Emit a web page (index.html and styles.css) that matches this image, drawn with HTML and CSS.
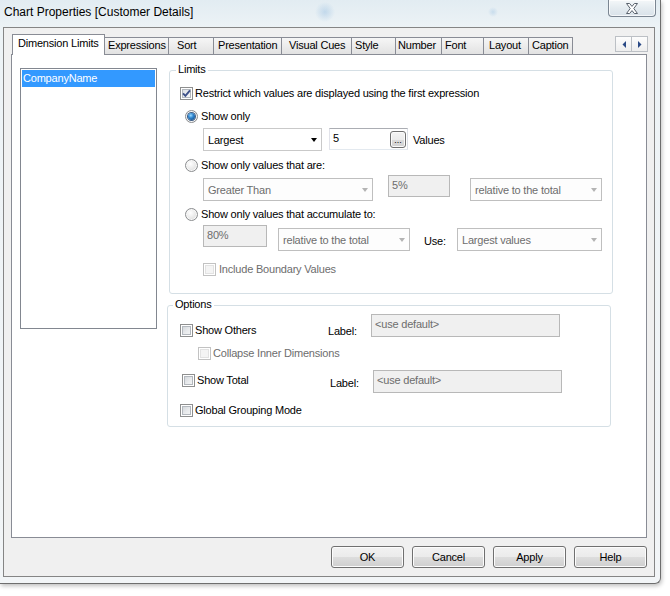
FILE: index.html
```html
<!DOCTYPE html>
<html>
<head>
<meta charset="utf-8">
<title>Chart Properties</title>
<link rel="stylesheet" href="styles.css">
</head>
<body>
<div class="window">
  <div class="titlebar">
    <span class="title">Chart Properties [Customer Details]</span>
    <div class="close">
      <svg width="14" height="11" viewBox="0 0 14 11"><path d="M1.5 0.5 H4.6 L7 3.4 L9.4 0.5 H12.5 L8.8 5.5 L12.5 10.5 H9.4 L7 7.6 L4.6 10.5 H1.5 L5.2 5.5 Z" fill="#fff" stroke="#59626d" stroke-width="1" stroke-linejoin="round"/></svg>
    </div>
  </div>
  <div class="client">
    <div class="tabstrip">
      <div class="tab sel t-dim">Dimension Limits</div>
      <div class="tab t-expr">Expressions</div>
      <div class="tab t-sort">Sort</div>
      <div class="tab t-pres">Presentation</div>
      <div class="tab t-vc">Visual Cues</div>
      <div class="tab t-style">Style</div>
      <div class="tab t-num">Number</div>
      <div class="tab t-font">Font</div>
      <div class="tab t-layout">Layout</div>
      <div class="tab t-cap">Caption</div>
      <div class="tabscroll">
        <span class="sbtn"><svg width="4" height="7" viewBox="0 0 4 7"><path d="M4 0 V7 L0.5 3.5 Z" fill="#2b4a86"/></svg></span>
        <span class="sbtn"><svg width="4" height="7" viewBox="0 0 4 7"><path d="M0 0 V7 L3.5 3.5 Z" fill="#2b4a86"/></svg></span>
      </div>
    </div>
    <div class="panel">
      <div class="listbox">
        <div class="item sel">CompanyName</div>
      </div>
      <div class="groups">
        <div class="group limits">
          <div class="gtitle gt-limits">Limits</div>
          <div class="row r1">
            <span class="chk checked"><svg width="11" height="11" viewBox="0 0 11 11"><path d="M2 5.3 L4.4 7.8 L9 2.4" fill="none" stroke="#3e5189" stroke-width="1.9"/></svg></span>
            <span class="lbl ml2">Restrict which values are displayed using the first expression</span>
          </div>
          <div class="row r2">
            <span class="rad on"><span class="dot"></span></span>
            <span class="lbl ml3">Show only</span>
          </div>
          <div class="row r3">
            <div class="combo w119"><span>Largest</span><span class="arr"></span></div>
            <div class="edit e-five"><span>5</span><span class="dots">...</span></div>
            <span class="lbl values">Values</span>
          </div>
          <div class="row r4">
            <span class="rad"></span>
            <span class="lbl ml3">Show only values that are:</span>
          </div>
          <div class="row r5">
            <div class="combo dis w170 mt3"><span>Greater Than</span><span class="arr"></span></div>
            <div class="edit dis e-pct">5%</div>
            <div class="combo dis w132 mt3 ml20"><span>relative to the total</span><span class="arr"></span></div>
          </div>
          <div class="row r6">
            <span class="rad"></span>
            <span class="lbl ml3">Show only values that accumulate to:</span>
          </div>
          <div class="row r7">
            <div class="edit dis e-80">80%</div>
            <div class="combo dis w132 mt3 ml11"><span>relative to the total</span><span class="arr"></span></div>
            <span class="lbl use">Use:</span>
            <div class="combo dis w145 mt3"><span>Largest values</span><span class="arr"></span></div>
          </div>
          <div class="row r8">
            <span class="chk dis"></span>
            <span class="lbl ml3 grey">Include Boundary Values</span>
          </div>
        </div>
        <div class="group options">
          <div class="gtitle gt-options">Options</div>
          <div class="row o1">
            <div class="cell c-others">
              <span class="chk"></span>
              <span class="lbl ml2">Show Others</span>
            </div>
            <span class="lbl lab lab1">Label:</span>
            <div class="edit dis e-label">&lt;use default&gt;</div>
          </div>
          <div class="row o2">
            <span class="chk dis"></span>
            <span class="lbl ml2 grey">Collapse Inner Dimensions</span>
          </div>
          <div class="row o3">
            <div class="cell c-total">
              <span class="chk"></span>
              <span class="lbl ml2">Show Total</span>
            </div>
            <span class="lbl lab lab2">Label:</span>
            <div class="edit dis e-label">&lt;use default&gt;</div>
          </div>
          <div class="row o4">
            <span class="chk"></span>
            <span class="lbl ml2">Global Grouping Mode</span>
          </div>
        </div>
      </div>
    </div>
    <div class="buttons">
      <div class="btn">OK</div>
      <div class="btn">Cancel</div>
      <div class="btn">Apply</div>
      <div class="btn">Help</div>
    </div>
  </div>
</div>
</body>
</html>
```
FILE: styles.css
```css
* { box-sizing: border-box; }

body {
  margin: 0;
  width: 670px;
  height: 596px;
  overflow: hidden;
  background: #ffffff;
  font-family: "Liberation Sans", Arial, sans-serif;
  font-size: 11px;
  letter-spacing: -0.2px;
  color: #000;
}

.window {
  width: 661px;
  height: 584px;
  background:
    radial-gradient(circle at 325px 12px, rgba(110,165,215,0.30) 0, rgba(110,165,215,0) 10px),
    radial-gradient(circle at 493px 12px, rgba(110,165,215,0.25) 0, rgba(110,165,215,0) 5px),
    linear-gradient(180deg, #e2ecf2 0%, #edf3f6 5%, #f2f5f7 100%);
  border-right: 1px solid #6e6e6e;
  border-bottom: 1px solid #6e6e6e;
  border-bottom-right-radius: 6px;
  box-shadow: 1px 2px 4px rgba(0,0,0,0.25);
}

.titlebar {
  height: 27px;
  display: flex;
  align-items: flex-start;
}

.title {
  font-size: 12px;
  letter-spacing: 0;
  line-height: 16px;
  padding: 4px 0 0 4px;
  color: #000;
}

.close {
  margin-left: auto;
  margin-right: 4px;
  width: 48px;
  height: 17px;
  border: 1px solid #7b8692;
  border-top: none;
  border-radius: 0 0 4px 4px;
  background: linear-gradient(180deg, #f4f7f9 0%, #e4ebf0 50%, #d9e2e9 100%);
  box-shadow: inset 0 0 0 1px rgba(255,255,255,0.7);
  display: flex;
  align-items: center;
  justify-content: center;
}

.client {
  margin-left: 3px;
  width: 652px;
  height: 550px;
  border: 1px solid #858585;
  background: #f0f0f0;
  padding: 6px 7px 0 7px;
}

/* tabs */
.tabstrip {
  height: 20px;
  display: flex;
  align-items: flex-end;
  padding-left: 1px;
}

.tab {
  height: 17px;
  border: 1px solid #898c95;
  border-bottom: none;
  margin-right: -1px;
  background: linear-gradient(180deg, #f6f6f6 0%, #ececec 50%, #e2e2e2 100%);
  line-height: 13px;
  padding-top: 1px;
  white-space: nowrap;
}

.tab.sel {
  height: 21px;
  margin-bottom: -1px;
  background: #ffffff;
  padding-top: 2px;
  position: relative;
  z-index: 2;
}

.t-dim { width: 93px; padding-left: 5px; }
.t-expr { width: 65px; padding-left: 3px; }
.t-sort { width: 46px; padding-left: 8px; }
.t-pres { width: 69px; padding-left: 4px; }
.t-vc { width: 71px; padding-left: 7px; }
.t-style { width: 45px; padding-left: 3px; }
.t-num { width: 47px; padding-left: 2px; }
.t-font { width: 43px; padding-left: 3px; }
.t-layout { width: 46px; padding-left: 5px; }
.t-cap { width: 45px; padding-left: 3px; }

.tabscroll {
  margin-left: auto;
  margin-right: -1px;
  align-self: flex-start;
  margin-top: 2px;
  display: flex;
}

.sbtn {
  width: 17px;
  height: 16px;
  margin-left: -1px;
  border: 1px solid #bcc0c5;
  background: linear-gradient(180deg, #fdfdfd 0%, #eeeeee 100%);
  display: flex;
  align-items: center;
  justify-content: center;
}

/* panel */
.panel {
  width: 636px;
  height: 484px;
  border: 1px solid #898c95;
  background: #ffffff;
  display: flex;
  align-items: flex-start;
  padding: 13px 0 0 8px;
}

.listbox {
  width: 137px;
  height: 261px;
  border: 1px solid #828790;
  padding: 1px;
}

.item {
  height: 17px;
  line-height: 17px;
  padding-left: 1px;
  white-space: nowrap;
}

.item.sel {
  background: #3399ff;
  color: #ffffff;
}

.groups {
  margin-left: 10px;
  display: flex;
  flex-direction: column;
}

.group {
  width: 444px;
  border: 1px solid #d5dfe5;
  border-radius: 3px;
  display: flex;
  flex-direction: column;
  align-items: flex-start;
}

.limits {
  margin-left: 2px;
  margin-top: 2px;
  height: 224px;
}

.options {
  margin-top: 11px;
  height: 122px;
}

.gtitle {
  margin-top: -8px;
  background: #ffffff;
  padding: 0 2px;
  line-height: 13px;
  height: 13px;
}

.gt-limits { margin-left: 6px; }
.gt-options { margin-left: 5px; }

.row {
  display: flex;
  align-items: flex-start;
}

.lbl {
  line-height: 13px;
  white-space: nowrap;
}

.grey { color: #6d6d6d; }

.ml2 { margin-left: 2px; }
.ml3 { margin-left: 3px; }
.ml11 { margin-left: 11px; }
.ml20 { margin-left: 20px; }
.mt3 { margin-top: 3px; }

/* checkbox */
.chk {
  flex: none;
  width: 13px;
  height: 13px;
  border: 1px solid #8e8f8f;
  background: linear-gradient(135deg, #cbcfd4 0%, #e9ebed 55%, #f8f8f8 100%);
  box-shadow: inset 0 0 0 1px #ffffff, inset 0 0 0 2px #b3b8be;
  display: flex;
}

.chk.checked {
  background: linear-gradient(135deg, #d7dade 0%, #eff0f2 60%, #fafafa 100%);
}

.chk.dis {
  border-color: #c2c2c2;
  background: #f4f4f4;
  box-shadow: inset 0 0 0 1px #ffffff, inset 0 0 0 2px #e2e2e2;
}

/* radio */
.rad {
  flex: none;
  width: 13px;
  height: 13px;
  border-radius: 50%;
  border: 1px solid #8b8d8f;
  background: radial-gradient(circle at 40% 35%, #ffffff 0%, #e8e8e8 55%, #cdcdcd 100%);
  box-shadow: inset 0 0 0 1px #f8f8f8;
  display: flex;
  align-items: center;
  justify-content: center;
}

.dot {
  width: 7px;
  height: 7px;
  border-radius: 50%;
  background: radial-gradient(circle at 40% 35%, #9fdcff 0%, #2f86d0 40%, #0b3a70 100%);
  box-shadow: 0 0 0 1px #3d5e86;
}

/* combo */
.combo {
  flex: none;
  height: 23px;
  border: 1px solid #c9c9c9;
  background: #ffffff;
  display: flex;
  align-items: center;
  justify-content: space-between;
  padding: 0 4px 0 4px;
  white-space: nowrap;
}

.combo.dis {
  border-color: #bfbfbf;
  background: #fdfdfd;
  color: #6d6d6d;
}

.arr {
  width: 0;
  height: 0;
  border-left: 3.5px solid transparent;
  border-right: 3.5px solid transparent;
  border-top: 4px solid #000;
}

.combo.dis .arr { border-top-color: #b4b4b4; }

.w119 { width: 119px; }
.w170 { width: 170px; }
.w132 { width: 132px; }
.w145 { width: 145px; }

/* edit */
.edit {
  flex: none;
  height: 22px;
  border: 1px solid #abadb3;
  border-color: #abadb3 #dbdfe6 #e3e9ef #e2e3ea;
  background: #ffffff;
  line-height: 13px;
  padding: 3px 3px 0 3px;
  white-space: nowrap;
}

.edit.dis {
  border: 1px solid #b8b8b8;
  background: #f0f0f0;
  color: #6d6d6d;
}

.e-five {
  width: 79px;
  margin-left: 7px;
  display: flex;
  align-items: flex-start;
  padding: 3px 1px 0 3px;
}

.dots {
  margin-left: auto;
  margin-top: -1px;
  width: 16px;
  height: 17px;
  border: 1px solid #707070;
  border-radius: 3px;
  background: linear-gradient(180deg, #f4f4f4 0%, #ebebeb 50%, #dddddd 51%, #d2d2d2 100%);
  box-shadow: inset 0 0 0 1px #fbfbfb;
  font-size: 9px;
  letter-spacing: 0;
  line-height: 17px;
  text-align: center;
}

.values { margin-left: 5px; margin-top: 6px; }

.e-pct { width: 62px; margin-left: 15px; }
.e-80 { width: 64px; }
.e-label { width: 189px; height: 23px; color: #a0a0a0; }

.use { width: 33px; margin-left: 14px; margin-top: 10px; }

/* limits rows */
.r1 { margin-top: 11px; margin-left: 10px; }
.r2 { margin-top: 10px; margin-left: 15px; }
.r3 { margin-top: 5px; margin-left: 33px; }
.r4 { margin-top: 8px; margin-left: 15px; }
.r5 { margin-top: 3px; margin-left: 33px; }
.r6 { margin-top: 7px; margin-left: 15px; }
.r7 { margin-top: 4px; margin-left: 33px; }
.r8 { margin-top: 12px; margin-left: 33px; }

/* options rows */
.cell {
  display: flex;
  align-items: flex-start;
  width: 148px;
}

.o1 { margin-top: 3px; margin-left: 12px; }
.o1 .cell { padding-top: 10px; }
.lab { width: 43px; }
.lab1 { margin-top: 11px; }

.o2 { margin-top: 9px; margin-left: 30px; }

.o3 { margin-top: 10px; margin-left: 14px; }
.o3 .cell { padding-top: 4px; }
.lab2 { margin-top: 7px; }

.o4 { margin-top: 11px; margin-left: 12px; }

/* buttons */
.buttons {
  margin-top: 8px;
  display: flex;
  justify-content: flex-end;
  gap: 8px;
}

.btn {
  width: 73px;
  height: 22px;
  border: 1px solid #707070;
  border-radius: 3px;
  background: linear-gradient(180deg, #f2f2f2 0%, #ebebeb 50%, #dddddd 51%, #cfcfcf 100%);
  box-shadow: inset 0 0 0 1px #fcfcfc;
  line-height: 20px;
  text-align: center;
}
```
